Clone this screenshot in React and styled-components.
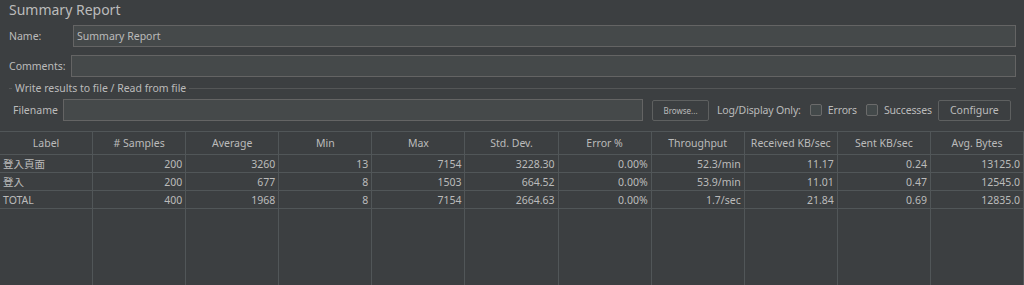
import React from "react";
import styled, { createGlobalStyle } from "styled-components";

const GlobalStyle = createGlobalStyle`
  html, body {
    margin: 0;
    padding: 0;
    background: #3c3f41;
  }
  body {
    font-family: "Noto Sans", "Noto Sans CJK TC", sans-serif;
    color: #bbbbbb;
  }
`;

const columns = [
  "Label",
  "# Samples",
  "Average",
  "Min",
  "Max",
  "Std. Dev.",
  "Error %",
  "Throughput",
  "Received KB/sec",
  "Sent KB/sec",
  "Avg. Bytes",
];

const rows = [
  ["登入頁面", "200", "3260", "13", "7154", "3228.30", "0.00%", "52.3/min", "11.17", "0.24", "13125.0"],
  ["登入", "200", "677", "8", "1503", "664.52", "0.00%", "53.9/min", "11.01", "0.47", "12545.0"],
  ["TOTAL", "400", "1968", "8", "7154", "2664.63", "0.00%", "1.7/sec", "21.84", "0.69", "12835.0"],
];

const App = () => {
  return (
    <>
      <GlobalStyle />
      <Page>
        <Title>Summary Report</Title>
        <FieldRow>
          <FieldLabel width="64px">Name:</FieldLabel>
          <TextInput defaultValue="Summary Report" />
        </FieldRow>
        <FieldRow>
          <FieldLabel width="62px">Comments:</FieldLabel>
          <TextInput defaultValue="" />
        </FieldRow>
        <Group>
          <Legend>Write results to file / Read from file</Legend>
          <FileRow>
            <FileLabel>Filename</FileLabel>
            <FileInput defaultValue="" />
            <SmallButton>Browse...</SmallButton>
            <InlineText gap="8px">Log/Display Only:</InlineText>
            <Check />
            <InlineText gap="6px">Errors</InlineText>
            <Check />
            <InlineText gap="6px">Successes</InlineText>
            <Button>Configure</Button>
          </FileRow>
        </Group>
        <Table>
          <HeaderRow>
            {columns.map((c) => (
              <HeadCell key={c}>{c}</HeadCell>
            ))}
          </HeaderRow>
          {rows.map((r) => (
            <Row key={r[0]}>
              {r.map((v, i) => (
                <Cell key={i} left={i === 0}>
                  {v}
                </Cell>
              ))}
            </Row>
          ))}
          <Filler>
            {columns.map((c) => (
              <EmptyCol key={c} />
            ))}
          </Filler>
        </Table>
      </Page>
    </>
  );
};

export default App;

const Page = styled.div`
  width: 1024px;
  height: 285px;
  display: flex;
  flex-direction: column;
  overflow: hidden;
  font-size: 10.5px;
`;

const Title = styled.div`
  font-size: 14px;
  color: #bbbbbb;
  padding: 0 0 0 9px;
  height: 25px;
  line-height: 20px;
`;

const FieldRow = styled.div`
  display: flex;
  align-items: center;
  height: 22px;
  padding: 0 8px 0 9px;
  margin-bottom: 8px;
`;

const FieldLabel = styled.div`
  width: ${({ width }) => width};
  flex: none;
  font-size: 10.5px;
`;

const TextInput = styled.input`
  flex: 1;
  height: 22px;
  box-sizing: border-box;
  background: #45494a;
  border: 1px solid #646464;
  color: #bbbbbb;
  font-family: inherit;
  font-size: 10.5px;
  padding: 0 3px;
  outline: none;
`;

const Group = styled.div`
  position: relative;
  margin: 3px 8px 0 9px;
  border-top: 1px solid #545657;
  padding-top: 10px;
  height: 32px;
`;

const Legend = styled.div`
  position: absolute;
  top: -9px;
  left: 3px;
  padding: 0 3px;
  background: #3c3f41;
  font-size: 10.5px;
  line-height: 16px;
`;

const FileRow = styled.div`
  display: flex;
  align-items: center;
  height: 22px;
`;

const FileLabel = styled.div`
  padding-left: 4px;
  width: 50px;
  flex: none;
`;

const FileInput = styled(TextInput)`
  flex: none;
  width: 580px;
`;

const SmallButton = styled.div`
  margin-left: 9px;
  width: 57px;
  height: 21px;
  box-sizing: border-box;
  border: 1px solid #5e6060;
  border-radius: 2px;
  background: #3c3f41;
  font-size: 8px;
  display: flex;
  align-items: center;
  justify-content: center;
`;

const InlineText = styled.div`
  margin-left: ${({ gap }) => gap};
  white-space: nowrap;
  letter-spacing: -0.15px;
`;

const Check = styled.div`
  margin-left: 9px;
  width: 12px;
  height: 12px;
  box-sizing: border-box;
  border: 1px solid #6b6b6b;
  border-radius: 2px;
  background: #43494a;
`;

const Button = styled.div`
  margin-left: 6px;
  width: 73px;
  height: 21px;
  box-sizing: border-box;
  border: 1px solid #5e6060;
  border-radius: 2px;
  font-size: 10.5px;
  display: flex;
  align-items: center;
  justify-content: center;
`;

const Table = styled.div`
  flex: 1;
  display: flex;
  flex-direction: column;
  border-top: 1px solid #515658;
`;

const HeaderRow = styled.div`
  display: grid;
  grid-template-columns: repeat(11, 1fr);
  height: 22px;
  border-bottom: 1px solid #515658;
`;

const HeadCell = styled.div`
  display: flex;
  align-items: center;
  justify-content: center;
  border-right: 1px solid #515658;
  font-size: 10.5px;
  white-space: nowrap;
`;

const Row = styled.div`
  display: grid;
  grid-template-columns: repeat(11, 1fr);
  height: 18px;
  box-sizing: border-box;
  border-bottom: 1px solid #515658;
`;

const Cell = styled.div`
  display: flex;
  align-items: center;
  justify-content: ${({ left }) => (left ? "flex-start" : "flex-end")};
  padding: 0 3px;
  border-right: 1px solid #515658;
  font-size: 10.5px;
  white-space: nowrap;
`;

const Filler = styled.div`
  flex: 1;
  display: grid;
  grid-template-columns: repeat(11, 1fr);
`;

const EmptyCol = styled.div`
  border-right: 1px solid #515658;
`;
